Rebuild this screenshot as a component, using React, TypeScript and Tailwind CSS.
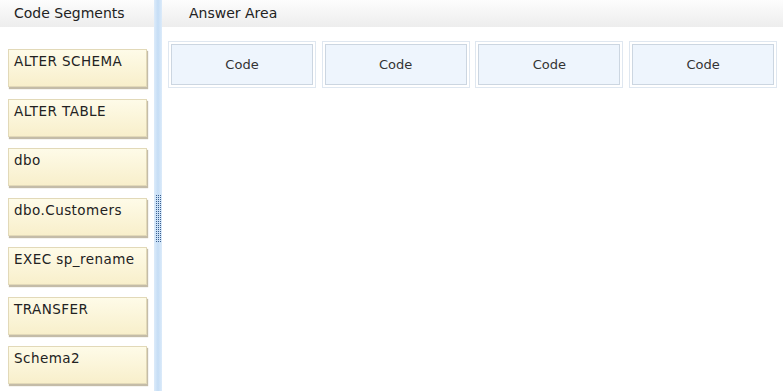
import React from "react";

const items = ["ALTER SCHEMA", "ALTER TABLE", "dbo", "dbo.Customers", "EXEC sp_rename", "TRANSFER", "Schema2"];

export default function App() {
  return (
    <div className="flex w-[783px] h-[391px] bg-white overflow-hidden text-[#222]" style={{ fontFamily: '"DejaVu Sans", Verdana, sans-serif' }}>
      <div className="flex flex-col w-[154px] shrink-0">
        <div className="h-[27px] shrink-0 pl-[14px] pt-[3px] text-[14px] bg-gradient-to-b from-[#fdfdfd] to-[#ededed]">Code Segments</div>
        <div className="flex flex-col gap-[11.5px] pt-[22px] pl-[8px]">
          {items.map((t) => (
            <div key={t} className="w-[139px] h-[38px] border border-[#e2d9b8] bg-gradient-to-b from-[#fefbe8] to-[#f8efcb] shadow-[1px_2px_1px_#c4bca8] pl-[5px] pt-[1px] text-[13.5px] tracking-[0.45px]">
              {t}
            </div>
          ))}
        </div>
      </div>
      <div className="relative w-[8px] shrink-0 bg-gradient-to-r from-[#dcebfa] via-[#c5ddf5] to-[#dcebfa]">
        <svg className="absolute left-[2px] top-[195px]" width="5" height="49" viewBox="0 0 5 49">
          {Array.from({ length: 24 }).map((_, r) =>
            [0, 2, 4].map((c) => (
              <rect key={`${r}-${c}`} x={c} y={r * 2} width="1" height="1" fill="#3a5f8f" />
            ))
          )}
        </svg>
      </div>
      <div className="flex-1 flex flex-col">
        <div className="h-[27px] shrink-0 pl-[27px] pt-[3px] text-[14px] bg-gradient-to-b from-[#fdfdfd] to-[#ededed]">Answer Area</div>
        <div className="flex gap-[5.7px] pt-[14px] pl-[6px]">
          {[0, 1, 2, 3].map((i) => (
            <div key={i} className="w-[148px] h-[47px] border border-[#dfe7f0] p-[2px] bg-white">
              <div className="w-full h-full border border-[#ccd6e1] bg-[#eef5fd] flex items-center justify-center text-[13px] text-[#333]">
                Code
              </div>
            </div>
          ))}
        </div>
      </div>
    </div>
  );
}
